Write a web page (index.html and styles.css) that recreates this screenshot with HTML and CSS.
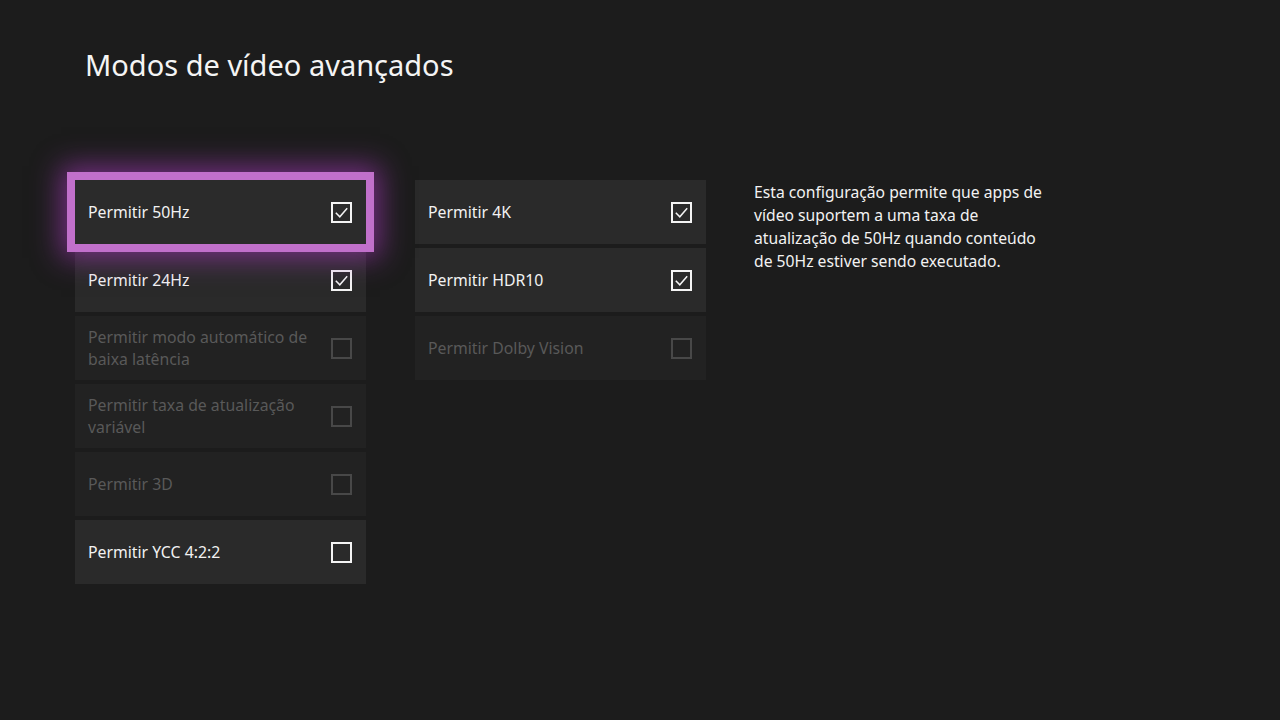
FILE: index.html
```html
<!DOCTYPE html>
<html lang="pt-BR">
<head>
<meta charset="utf-8">
<title>Modos de vídeo avançados</title>
<link rel="stylesheet" href="styles.css">
</head>
<body>
<main class="page">
  <h1 class="title">Modos de vídeo avançados</h1>
  <div class="panels">
    <div class="col">
      <div class="tile focus"><span class="label">Permitir 50Hz</span><span class="box on"><svg viewBox="0 0 21 21"><path d="M4.8 10.8 L8.8 14.8 L16.2 6.3"/></svg></span></div>
      <div class="tile"><span class="label">Permitir 24Hz</span><span class="box on"><svg viewBox="0 0 21 21"><path d="M4.8 10.8 L8.8 14.8 L16.2 6.3"/></svg></span></div>
      <div class="tile off"><span class="label">Permitir modo automático de baixa latência</span><span class="box"></span></div>
      <div class="tile off"><span class="label">Permitir taxa de atualização variável</span><span class="box"></span></div>
      <div class="tile off"><span class="label">Permitir 3D</span><span class="box"></span></div>
      <div class="tile"><span class="label">Permitir YCC 4:2:2</span><span class="box"></span></div>
    </div>
    <div class="col">
      <div class="tile"><span class="label">Permitir 4K</span><span class="box on"><svg viewBox="0 0 21 21"><path d="M4.8 10.8 L8.8 14.8 L16.2 6.3"/></svg></span></div>
      <div class="tile"><span class="label">Permitir HDR10</span><span class="box on"><svg viewBox="0 0 21 21"><path d="M4.8 10.8 L8.8 14.8 L16.2 6.3"/></svg></span></div>
      <div class="tile off"><span class="label">Permitir Dolby Vision</span><span class="box"></span></div>
    </div>
    <p class="desc">Esta configuração permite que apps de<br>vídeo suportem a uma taxa de<br>atualização de 50Hz quando conteúdo<br>de 50Hz estiver sendo executado.</p>
  </div>
</main>
</body>
</html>
```
FILE: styles.css
```css
html, body {
  margin: 0;
  padding: 0;
  background: #1c1c1c;
  width: 1280px;
  height: 720px;
  overflow: hidden;
}
body {
  font-family: "Noto Sans", "Open Sans", sans-serif;
  color: #f2f2f2;
}
.page {
  padding: 0 0 0 75px;
}
.title {
  margin: 0;
  padding: 45px 0 0 10px;
  font-size: 29px;
  line-height: 40px;
  font-weight: 400;
  color: #f4f4f4;
}
.panels {
  display: flex;
  align-items: flex-start;
  margin-top: 95px;
}
.col {
  width: 291px;
  display: flex;
  flex-direction: column;
  gap: 4px;
}
.col + .col {
  margin-left: 49px;
}
.tile {
  height: 64px;
  box-sizing: border-box;
  display: flex;
  align-items: center;
  justify-content: space-between;
  padding: 0 14px 0 13px;
  background: #2a2a2a;
  font-size: 15.8px;
  line-height: 22px;
}
.tile.focus {
  position: relative;
  z-index: 1;
  background: #2b2b2b;
  box-shadow: 0 0 0 8px #c170cb, 0 0 26px 14px rgba(160, 55, 180, 0.65);
}
.tile.off {
  background: #222222;
  color: #595959;
}
.label {
  max-width: 236px;
}
.box {
  flex: none;
  width: 21px;
  height: 21px;
  box-sizing: border-box;
  border: 2px solid #f4f4f4;
  display: flex;
  align-items: center;
  justify-content: center;
}
.tile.off .box {
  border-color: #484848;
}
.box svg {
  width: 21px;
  height: 21px;
  margin: -2px;
  fill: none;
  stroke: #f4f4f4;
  stroke-width: 1.5;
}
.desc {
  margin: 0 0 0 48px;
  padding-top: 1px;
  white-space: nowrap;
  font-size: 15.7px;
  line-height: 23px;
  color: #f2f2f2;
}
```
